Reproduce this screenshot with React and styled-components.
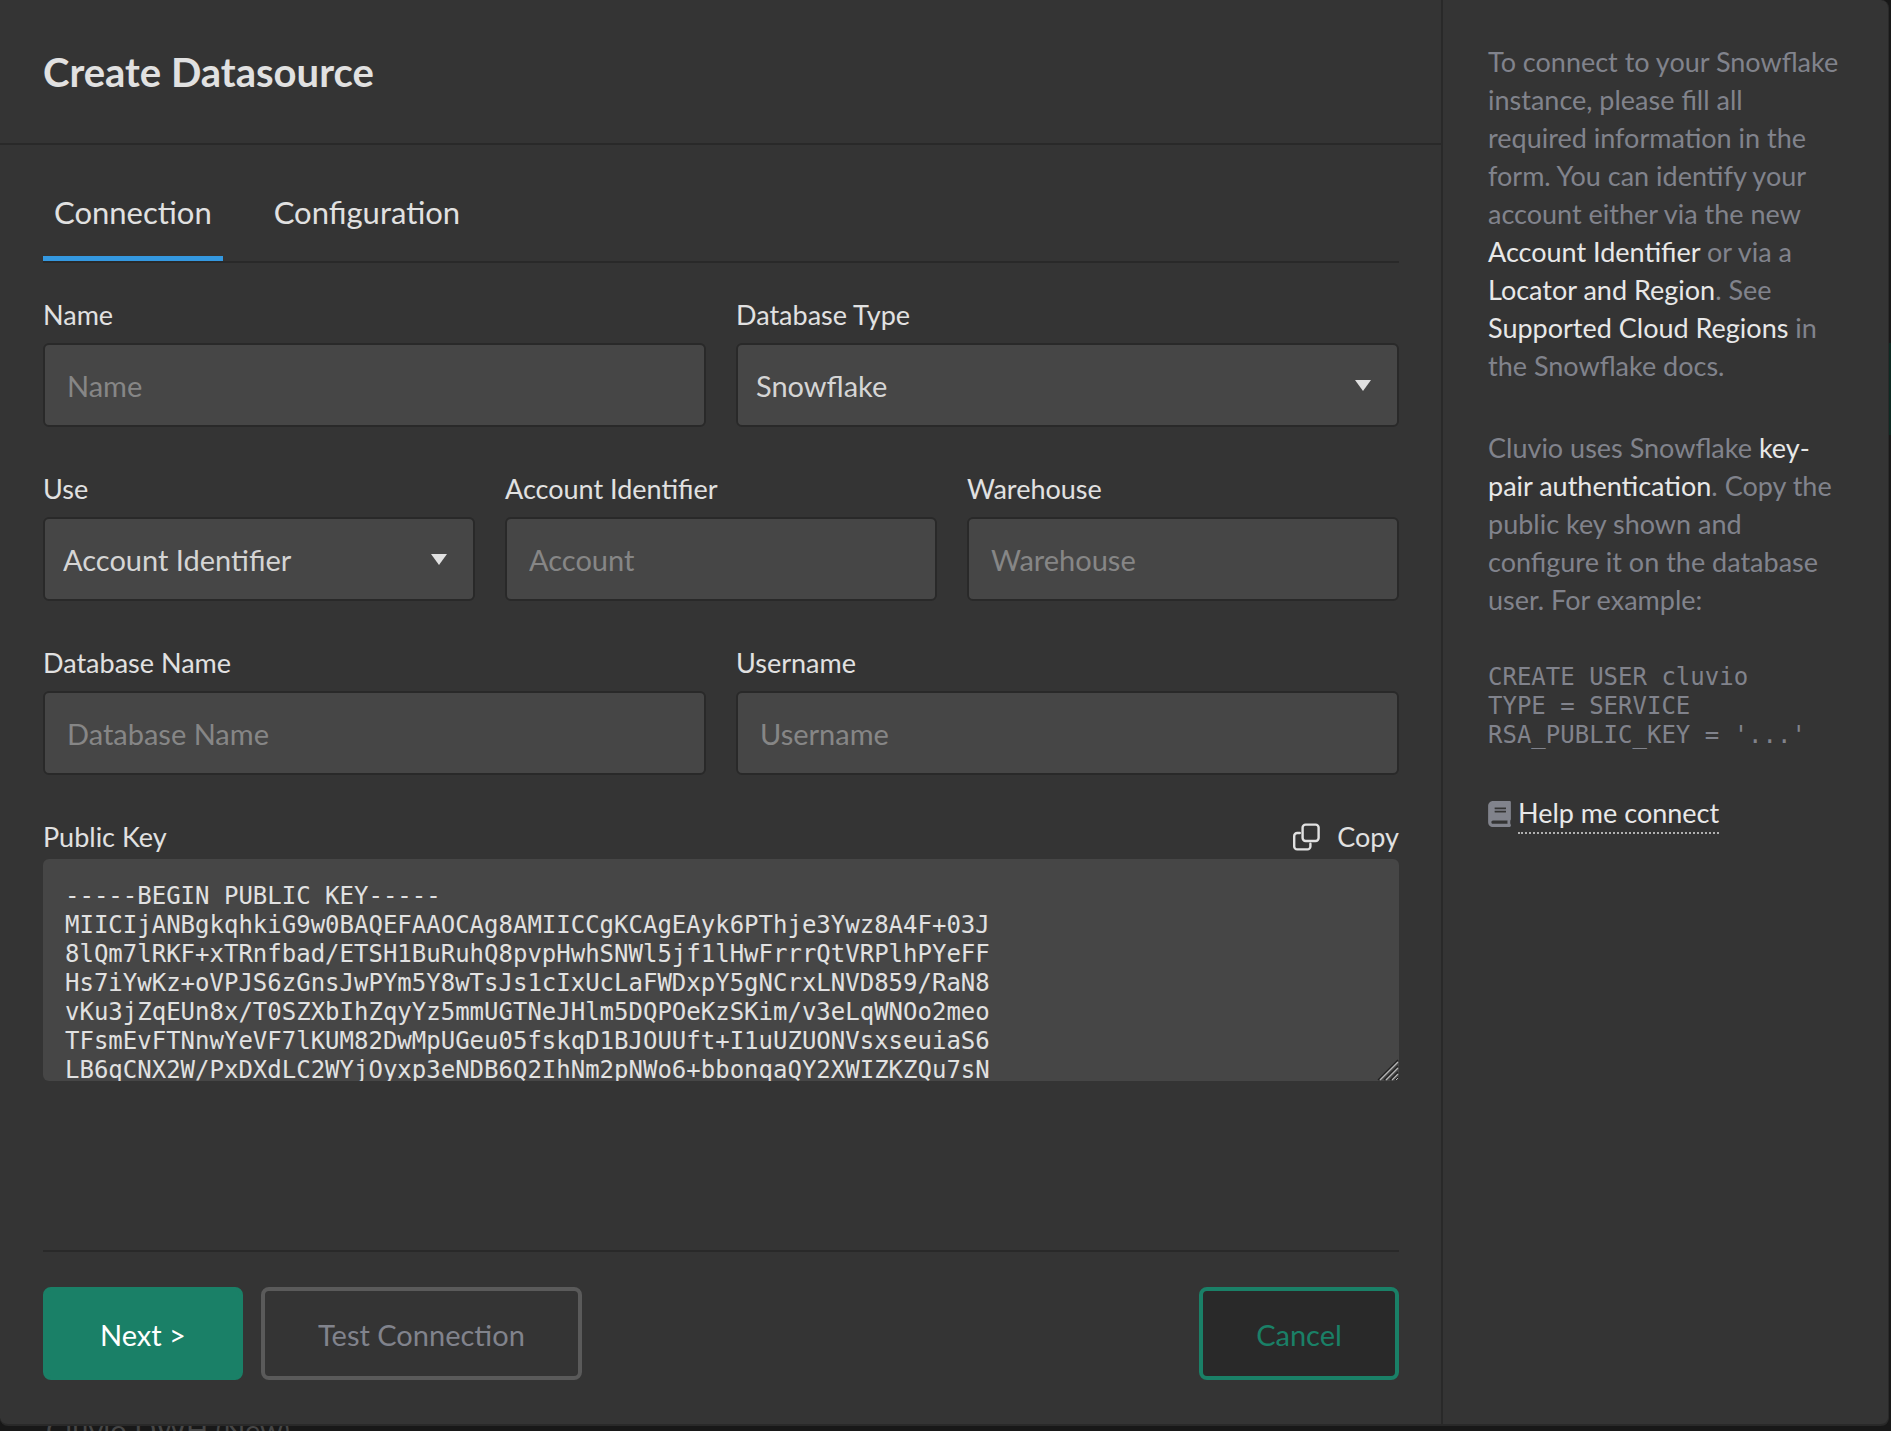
import React, { useState } from "react";
import styled, { createGlobalStyle } from "styled-components";
import { FaBook } from "react-icons/fa";

const GlobalStyle = createGlobalStyle`
  * {
    box-sizing: border-box;
  }

  body {
    margin: 0;
    background: #181818;
    color: #e1e1e1;
    font-family: Lato, "Liberation Sans", sans-serif;
    font-size: 27px;
    line-height: 38px;
  }

  button, input, select, textarea {
    font: inherit;
    color: inherit;
  }
`;

const Page = styled.div`
  position: relative;
  min-height: 100vh;
  display: flex;
  flex-direction: column;
  overflow: hidden;
`;

const Modal = styled.div`
  position: relative;
  flex: 1;
  display: grid;
  grid-template-columns: minmax(0, 1fr) 447px;
  margin-right: 2px;
  background: #343434;
  border-right: 1px solid #292929;
  border-bottom: 2px solid #292929;
  border-radius: 0 8px 8px 8px;
`;

const Behind = styled.div`
  height: 5px;
  padding-left: 46px;
  overflow: hidden;
  color: #464646;
  font-size: 29px;
  line-height: 8px;
  white-space: nowrap;
`;

const BehindButton = styled.div`
  position: absolute;
  top: 343px;
  right: 0;
  width: 20px;
  height: 92px;
  background: #0d2a22;
`;

const Main = styled.main`
  display: flex;
  flex-direction: column;
`;

const Header = styled.header`
  padding: 49px 43px 47px;
  border-bottom: 2px solid #292929;
`;

const Title = styled.h1`
  margin: 0;
  font-size: 40px;
  font-weight: 700;
  line-height: 47px;
`;

const Form = styled.form`
  flex: 1;
  display: flex;
  flex-direction: column;
  padding: 0 42px 44px 43px;
`;

const Tabs = styled.div`
  display: flex;
  gap: 40px;
  padding-top: 32px;
  border-bottom: 2px solid #292929;
`;

const Tab = styled.button`
  height: 84px;
  padding: 0 11px 10px;
  border: 0;
  border-bottom: 5px solid ${({ $active }) => ($active ? "#3498e0" : "transparent")};
  background: none;
  font-size: 31px;
  cursor: pointer;
`;

const Fields = styled.div`
  display: flex;
  flex-direction: column;
  gap: 43px;
  padding: 33px 0 40px;
`;

const Row = styled.div`
  display: grid;
  grid-template-columns: repeat(${({ $columns }) => $columns}, minmax(0, 1fr));
  gap: 30px;
`;

const FieldBox = styled.div`
  display: flex;
  flex-direction: column;
  gap: ${({ $tight }) => ($tight ? "3px" : "9px")};
`;

const Input = styled.input`
  width: 100%;
  height: 84px;
  padding: 0 22px;
  border: 2px solid #292929;
  border-radius: 6px;
  outline: none;
  background: #464646;
  font-size: 29px;

  &::placeholder {
    color: #868686;
    opacity: 1;
  }
`;

const SelectWrap = styled.div`
  position: relative;

  & svg {
    position: absolute;
    top: 37px;
    right: 28px;
    pointer-events: none;
  }
`;

const Select = styled.select`
  display: block;
  width: 100%;
  height: 84px;
  padding: 2px 60px 0 18px;
  border: 2px solid #292929;
  border-radius: 6px;
  outline: none;
  appearance: none;
  background: #464646;
  color: #d5d5d5;
  font-size: 29px;
`;

const KeyHeader = styled.div`
  display: flex;
  justify-content: space-between;
`;

const CopyButton = styled.button`
  display: flex;
  align-items: center;
  gap: 17px;
  padding: 0;
  border: 0;
  background: none;
  cursor: pointer;
`;

const KeyWrap = styled.div`
  position: relative;

  & svg {
    position: absolute;
    right: 0;
    bottom: 0;
    pointer-events: none;
  }
`;

const KeyArea = styled.textarea`
  display: block;
  width: 100%;
  height: 222px;
  padding: 23px 22px 0;
  border: 0;
  border-radius: 6px;
  outline: none;
  resize: vertical;
  overflow: hidden;
  background: #464646;
  font-family: "DejaVu Sans Mono", monospace;
  font-size: 24px;
  line-height: 29px;
  white-space: pre;
`;

const Footer = styled.footer`
  display: flex;
  gap: 18px;
  margin-top: auto;
  padding-top: 35px;
  border-top: 2px solid #292929;
`;

const Button = styled.button`
  min-width: 200px;
  height: 93px;
  padding: 2px 53px 0;
  border: 4px solid #1a8067;
  border-radius: 8px;
  background: #1a8067;
  color: #fff;
  font-size: 29px;
  cursor: pointer;
`;

const TestButton = styled(Button)`
  border-color: #5a5a5a;
  background: none;
  color: #81838c;
`;

const CancelButton = styled(Button)`
  margin-left: auto;
  background: #292929;
  color: #1a8067;
`;

const Sidebar = styled.aside`
  display: flex;
  flex-direction: column;
  align-items: flex-start;
  gap: 44px;
  padding: 43px 45px;
  border-left: 2px solid #292929;
  color: #81838c;

  & p {
    margin: 0;
  }

  & a {
    color: #e8e8e8;
    text-decoration: none;
  }
`;

const Code = styled.pre`
  margin: 0;
  font-family: "DejaVu Sans Mono", monospace;
  font-size: 24px;
  line-height: 29px;
`;

const Help = styled.div`
  display: flex;
  align-items: center;
  gap: 7px;

  & a {
    border-bottom: 2px dotted #b0b0b0;
  }
`;

const BookIcon = styled(FaBook)`
  width: 23px;
  height: 26px;
`;

const PUBLIC_KEY = `-----BEGIN PUBLIC KEY-----
MIICIjANBgkqhkiG9w0BAQEFAAOCAg8AMIICCgKCAgEAyk6PThje3Ywz8A4F+03J
8lQm7lRKF+xTRnfbad/ETSH1BuRuhQ8pvpHwhSNWl5jf1lHwFrrrQtVRPlhPYeFF
Hs7iYwKz+oVPJS6zGnsJwPYm5Y8wTsJs1cIxUcLaFWDxpY5gNCrxLNVD859/RaN8
vKu3jZqEUn8x/T0SZXbIhZqyYz5mmUGTNeJHlm5DQPOeKzSKim/v3eLqWNOo2meo
TFsmEvFTNnwYeVF7lKUM82DwMpUGeu05fskqD1BJOUUft+I1uUZUONVsxseuiaS6
LB6qCNX2W/PxDXdLC2WYjOyxp3eNDB6Q2IhNm2pNWo6+bbonqaQY2XWIZKZQu7sN`;

const CODE = `CREATE USER cluvio
TYPE = SERVICE
RSA_PUBLIC_KEY = '...'`;

const CopyIcon = () => (
  <svg width="27" height="28" viewBox="0 0 27 28" fill="none" stroke="currentColor" strokeWidth="2.4">
    <rect x="9.6" y="1.6" width="16" height="16.4" rx="3" />
    <path
      d="M6.8 10H4.2a3 3 0 0 0-3 3v10.4a3 3 0 0 0 3 3h10.2a3 3 0 0 0 3-3v-2.6"
      strokeLinecap="round"
    />
  </svg>
);

const ResizeGrip = () => (
  <svg width="22" height="22" viewBox="0 0 22 22" fill="none" strokeWidth="1.3">
    <path d="M1 21L21 1M7 21L21 7M13 21l8-8" stroke="#202020" />
    <path d="M3 21L21 3M9 21L21 9M15 21l6-6" stroke="#b4b4b4" />
  </svg>
);

const TextField = ({ id, label, placeholder = label }) => (
  <FieldBox>
    <label htmlFor={id}>{label}</label>
    <Input id={id} type="text" placeholder={placeholder} />
  </FieldBox>
);

const SelectField = ({ id, label, options }) => (
  <FieldBox>
    <label htmlFor={id}>{label}</label>
    <SelectWrap>
      <Select id={id}>
        {options.map((option) => (
          <option key={option}>{option}</option>
        ))}
      </Select>
      <svg width="16" height="11" viewBox="0 0 16 11" fill="#e1e1e1">
        <path d="M0 0h16L8 11z" />
      </svg>
    </SelectWrap>
  </FieldBox>
);

const App = () => {
  const [tab, setTab] = useState("Connection");

  return (
    <Page>
      <GlobalStyle />
      <BehindButton />
      <Modal>
        <Main>
          <Header>
            <Title>Create Datasource</Title>
          </Header>
          <Form onSubmit={(e) => e.preventDefault()}>
            <Tabs role="tablist">
              {["Connection", "Configuration"].map((name) => (
                <Tab
                  key={name}
                  type="button"
                  role="tab"
                  aria-selected={tab === name}
                  $active={tab === name}
                  onClick={() => setTab(name)}
                >
                  {name}
                </Tab>
              ))}
            </Tabs>
            <Fields>
              <Row $columns={2}>
                <TextField id="name" label="Name" />
                <SelectField id="type" label="Database Type" options={["Snowflake"]} />
              </Row>
              <Row $columns={3}>
                <SelectField id="use" label="Use" options={["Account Identifier"]} />
                <TextField id="account" label="Account Identifier" placeholder="Account" />
                <TextField id="warehouse" label="Warehouse" />
              </Row>
              <Row $columns={2}>
                <TextField id="database" label="Database Name" />
                <TextField id="username" label="Username" />
              </Row>
              <FieldBox $tight>
                <KeyHeader>
                  <label htmlFor="key">Public Key</label>
                  <CopyButton
                    type="button"
                    onClick={() => navigator.clipboard.writeText(PUBLIC_KEY)}
                  >
                    <CopyIcon />
                    Copy
                  </CopyButton>
                </KeyHeader>
                <KeyWrap>
                  <KeyArea id="key" readOnly value={PUBLIC_KEY} />
                  <ResizeGrip />
                </KeyWrap>
              </FieldBox>
            </Fields>
            <Footer>
              <Button type="submit">Next &gt;</Button>
              <TestButton type="button">Test Connection</TestButton>
              <CancelButton type="button">Cancel</CancelButton>
            </Footer>
          </Form>
        </Main>
        <Sidebar>
          <p>
            To connect to your Snowflake instance, please fill all required
            information in the form. You can identify your account either via
            the new <a href="#account">Account Identifier</a> or via a{" "}
            <a href="#locator">Locator and Region</a>. See{" "}
            <a href="#regions">Supported Cloud Regions</a> in the Snowflake
            docs.
          </p>
          <p>
            Cluvio uses Snowflake <a href="#key-pair">key-pair authentication</a>
            . Copy the public key shown and configure it on the database user.
            For example:
          </p>
          <Code>{CODE}</Code>
          <Help>
            <BookIcon />
            <a href="#help">Help me connect</a>
          </Help>
        </Sidebar>
      </Modal>
      <Behind>Cluvio DWH (New)</Behind>
    </Page>
  );
};

export default App;
